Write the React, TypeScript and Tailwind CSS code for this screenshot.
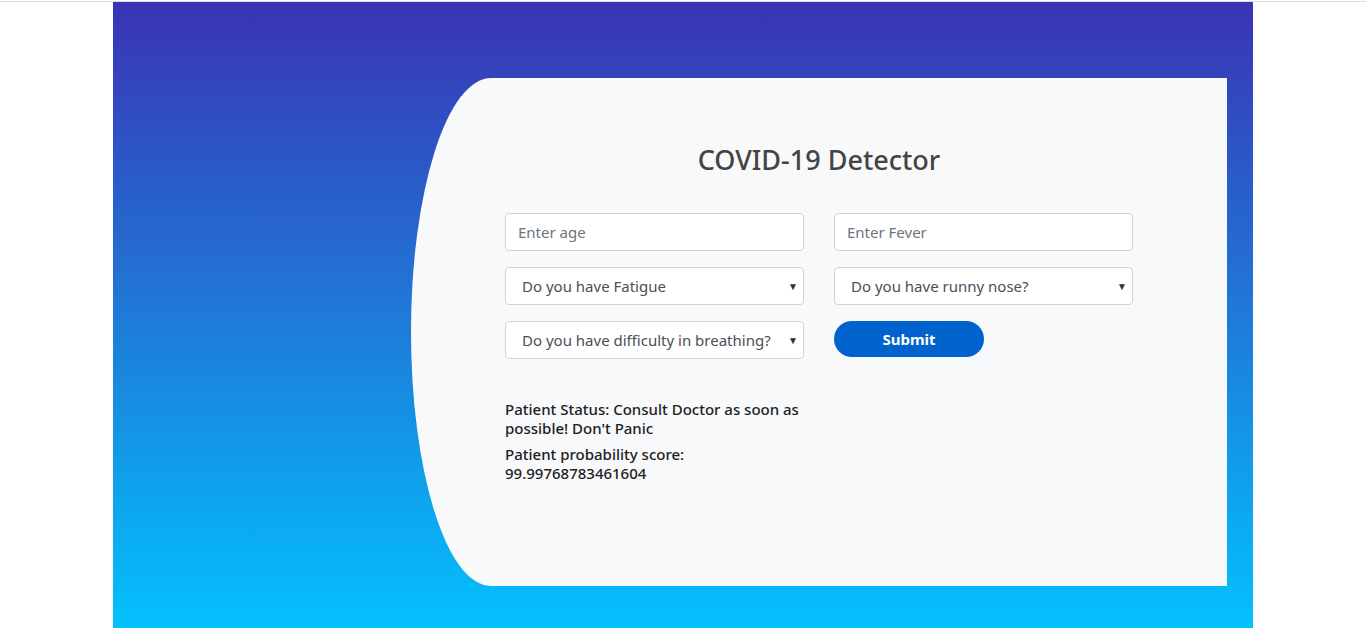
import React from 'react';

const font = { fontFamily: '"Noto Sans", "Open Sans", Arial, sans-serif' };

function Select({ label }: { label: string }) {
  return (
    <div className="relative">
      <select
        defaultValue=""
        className="h-[38px] w-full appearance-none rounded-[4px] border border-[#ced4da] bg-white pl-[16px] pr-8 pt-[1px] text-[15px] text-[#495057] outline-none"
      >
        <option value="">{label}</option>
        <option value="yes">Yes</option>
        <option value="no">No</option>
      </select>
      <span className="pointer-events-none absolute right-[6px] top-1/2 -translate-y-1/2 text-[10px] text-[#333]">
        ▼
      </span>
    </div>
  );
}

function TextInput({ placeholder }: { placeholder: string }) {
  return (
    <input
      placeholder={placeholder}
      className="h-[38px] w-full rounded-[4px] border border-[#ced4da] bg-white px-[12px] text-[15px] text-[#495057] outline-none placeholder:text-[#6c757d]"
    />
  );
}

export default function App() {
  return (
    <div className="min-h-screen bg-white" style={font}>
      <div className="mt-[1px] h-px bg-[#dedede]" />
      <div className="mx-auto min-h-[626px] w-[1140px] bg-linear-to-b/srgb from-[#3a33b3] to-[#03c1fd] pt-[76px] pb-[40px]">
        <div className="ml-auto mr-[26px] h-[508px] w-[816px] rounded-l-[80px_254px] bg-[#f8f9fb] pt-[66px]">
          <h1 className="text-center text-[27px] font-medium leading-[32px] text-[#444]">COVID-19 Detector</h1>
          <form className="mx-auto mt-[37px] w-[628px]" onSubmit={(e) => e.preventDefault()}>
            <div className="grid grid-cols-2 gap-x-[30px] gap-y-[16px]">
              <TextInput placeholder="Enter age" />
              <TextInput placeholder="Enter Fever" />
              <Select label="Do you have Fatigue" />
              <Select label="Do you have runny nose?" />
              <Select label="Do you have difficulty in breathing?" />
              <div>
                <button className="h-[36px] w-[150px] rounded-full bg-[#0062cc] text-[15px] font-bold text-white">
                  Submit
                </button>
              </div>
            </div>
            <div className="mt-[41px] w-[310px] text-[15px] font-medium leading-[19px] text-[#212121]">
              <p>Patient Status: Consult Doctor as soon as possible! Don't Panic</p>
              <p className="mt-[7px]">
                Patient probability score:
                <br />
                99.99768783461604
              </p>
            </div>
          </form>
        </div>
      </div>
    </div>
  );
}
